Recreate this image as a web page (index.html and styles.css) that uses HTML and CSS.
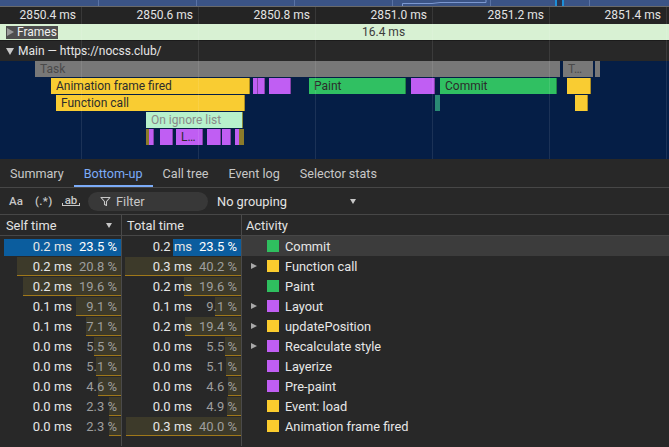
FILE: index.html
```html
<!DOCTYPE html>
<html>
<head>
<meta charset="utf-8">
<link rel="stylesheet" href="styles.css">
</head>
<body>
<div class="overview">
  <svg width="669" height="6" viewBox="0 0 669 6">
    <g stroke="#5a73a5" stroke-width="1">
      <line x1="98.5" y1="0" x2="98.5" y2="6"/>
      <line x1="196.5" y1="0" x2="196.5" y2="6"/>
      <line x1="294.5" y1="0" x2="294.5" y2="6"/>
      <line x1="392.5" y1="0" x2="392.5" y2="6"/>
      <line x1="490.5" y1="0" x2="490.5" y2="6"/>
      <line x1="589.5" y1="0" x2="589.5" y2="6"/>
    </g>
    <path d="M402.5 6 V3.5 H432 L440 2.5 H486 V0" fill="none" stroke="#7c98d0" stroke-width="1"/>
    <rect x="555" y="0" width="9" height="6" fill="#2a3550"/>
    <rect x="555" y="0" width="2" height="6" fill="#1d8fd8"/>
    <rect x="562" y="0" width="2" height="6" fill="#1d8fd8"/>
  </svg>
</div>
<div class="timeline">
  <div class="ruler">
    <span class="tick">2850.4 ms</span>
    <span class="tick">2850.6 ms</span>
    <span class="tick">2850.8 ms</span>
    <span class="tick">2851.0 ms</span>
    <span class="tick">2851.2 ms</span>
    <span class="tick">2851.4 ms</span>
  </div>
  <div class="frames">
    <span class="frames-label"><span class="tri-right"></span>Frames</span>
    <span class="frame-dur">16.4 ms</span>
  </div>
  <div class="track">
    <div class="main-head"><span class="tri-down"></span>Main — https://nocss.club/</div>
    <div class="flame">
      <div class="blk gray r0" style="left:35px;width:525px">Task</div>
      <div class="blk gray r0" style="left:563px;width:30px">T…</div>
      <div class="blk gray r0" style="left:595px;width:5px"></div>

      <div class="blk yellow r1" style="left:51px;width:199px">Animation frame fired</div>
      <div class="blk purple r1" style="left:253px;width:3px"></div>
      <div class="blk purple r1" style="left:258px;width:7px"></div>
      <div class="blk purple r1" style="left:269px;width:22px"></div>
      <div class="blk green r1" style="left:309px;width:97px">Paint</div>
      <div class="blk purple r1" style="left:411px;width:24px"></div>
      <div class="blk green r1" style="left:440px;width:117px">Commit</div>
      <div class="blk yellow r1" style="left:567px;width:24px"></div>

      <div class="blk yellow r2" style="left:56px;width:189px">Function call</div>
      <div class="blk teal r2" style="left:435px;width:1px"></div>
      <div class="blk yellow r2" style="left:575px;width:13px"></div>

      <div class="blk ignore r3" style="left:146px;width:97px">On ignore list</div>

      <div class="blk olive r4" style="left:146px;width:1px"></div>
      <div class="blk purple r4" style="left:149px;width:1px"></div>
      <div class="blk purple r4" style="left:160px;width:13px"></div>
      <div class="blk purple r4" style="left:176px;width:27px">L…</div>
      <div class="blk purple r4" style="left:207px;width:1px"></div>
      <div class="blk purple r4" style="left:211px;width:10px"></div>
      <div class="blk purple r4" style="left:222px;width:9px"></div>
      <div class="blk purple r4" style="left:235px;width:1px"></div>
      <div class="blk olive r4" style="left:239px;width:1px"></div>
    </div>
  </div>
</div>

<div class="tabs">
  <div class="tab">Summary</div>
  <div class="tab active">Bottom-up</div>
  <div class="tab">Call tree</div>
  <div class="tab">Event log</div>
  <div class="tab">Selector stats</div>
</div>

<div class="toolbar">
  <span class="tb-icon aa">Aa</span>
  <span class="tb-icon re">(.*)</span>
  <span class="tb-icon ab">ab</span>
  <div class="filter">
    <svg width="11" height="11" viewBox="0 0 11 11"><path d="M1 1.5 H10 L6.5 5.5 V9.5 L4.5 8.5 V5.5 Z" fill="none" stroke="#c7c7c7" stroke-width="1.1" stroke-linejoin="round"/></svg>
    <span>Filter</span>
  </div>
  <div class="grouping">No grouping</div>
  <span class="caret"></span>
</div>

<div class="table">
  <div class="hcell c1">Self time<span class="sort"></span></div>
  <div class="hcell c2">Total time</div>
  <div class="hcell c3">Activity</div>

  <div class="cell num c1"><span class="bar sel" style="width:117px"></span><span class="ms">0.2 ms</span><span class="pct hi">23.5 %</span></div>
  <div class="cell num c2"><span class="bar sel" style="width:68px"></span><span class="ms">0.2 ms</span><span class="pct hi">23.5 %</span></div>
  <div class="cell act selrow"><span class="exp none"></span><span class="sq green"></span>Commit</div>

  <div class="cell num c1"><span class="bar" style="width:104px"></span><span class="ms">0.2 ms</span><span class="pct">20.8 %</span></div>
  <div class="cell num c2"><span class="bar" style="width:116px"></span><span class="ms">0.3 ms</span><span class="pct">40.2 %</span></div>
  <div class="cell act"><span class="exp"></span><span class="sq yellow"></span>Function call</div>

  <div class="cell num c1"><span class="bar" style="width:98px"></span><span class="ms">0.2 ms</span><span class="pct">19.6 %</span></div>
  <div class="cell num c2"><span class="bar" style="width:57px"></span><span class="ms">0.2 ms</span><span class="pct">19.6 %</span></div>
  <div class="cell act"><span class="exp none"></span><span class="sq green"></span>Paint</div>

  <div class="cell num c1"><span class="bar" style="width:45px"></span><span class="ms">0.1 ms</span><span class="pct">9.1 %</span></div>
  <div class="cell num c2"><span class="bar" style="width:26px"></span><span class="ms">0.1 ms</span><span class="pct">9.1 %</span></div>
  <div class="cell act"><span class="exp"></span><span class="sq purple"></span>Layout</div>

  <div class="cell num c1"><span class="bar" style="width:35px"></span><span class="ms">0.1 ms</span><span class="pct">7.1 %</span></div>
  <div class="cell num c2"><span class="bar" style="width:56px"></span><span class="ms">0.2 ms</span><span class="pct">19.4 %</span></div>
  <div class="cell act"><span class="exp"></span><span class="sq yellow"></span>updatePosition</div>

  <div class="cell num c1"><span class="bar" style="width:27px"></span><span class="ms">0.0 ms</span><span class="pct">5.5 %</span></div>
  <div class="cell num c2"><span class="bar" style="width:16px"></span><span class="ms">0.0 ms</span><span class="pct">5.5 %</span></div>
  <div class="cell act"><span class="exp"></span><span class="sq purple"></span>Recalculate style</div>

  <div class="cell num c1"><span class="bar" style="width:25px"></span><span class="ms">0.0 ms</span><span class="pct">5.1 %</span></div>
  <div class="cell num c2"><span class="bar" style="width:15px"></span><span class="ms">0.0 ms</span><span class="pct">5.1 %</span></div>
  <div class="cell act"><span class="exp none"></span><span class="sq purple"></span>Layerize</div>

  <div class="cell num c1"><span class="bar" style="width:23px"></span><span class="ms">0.0 ms</span><span class="pct">4.6 %</span></div>
  <div class="cell num c2"><span class="bar" style="width:13px"></span><span class="ms">0.0 ms</span><span class="pct">4.6 %</span></div>
  <div class="cell act"><span class="exp none"></span><span class="sq purple"></span>Pre-paint</div>

  <div class="cell num c1"><span class="bar" style="width:12px"></span><span class="ms">0.0 ms</span><span class="pct">2.3 %</span></div>
  <div class="cell num c2"><span class="bar" style="width:14px"></span><span class="ms">0.0 ms</span><span class="pct">4.9 %</span></div>
  <div class="cell act"><span class="exp none"></span><span class="sq yellow"></span>Event: load</div>

  <div class="cell num c1"><span class="bar" style="width:12px"></span><span class="ms">0.0 ms</span><span class="pct">2.3 %</span></div>
  <div class="cell num c2"><span class="bar" style="width:115px"></span><span class="ms">0.3 ms</span><span class="pct">40.0 %</span></div>
  <div class="cell act"><span class="exp none"></span><span class="sq yellow"></span>Animation frame fired</div>

  <div class="cell fill c1"></div>
  <div class="cell fill c2"></div>
  <div class="cell fill"></div>
</div>
</body>
</html>
```
FILE: styles.css
```css
* { box-sizing: border-box; }
html, body { margin: 0; padding: 0; }
body {
  width: 669px;
  height: 447px;
  overflow: hidden;
  background: #282828;
  color: #e3e3e3;
  font-family: Roboto, "Liberation Sans", sans-serif;
}

.overview {
  height: 7px;
  background: #3b5486;
  border-bottom: 1px solid #6a6a6a;
}
.overview svg { display: block; }

.timeline { position: relative; overflow: hidden; }
.timeline::after {
  content: "";
  position: absolute;
  top: 0; bottom: 0;
  left: -35px; right: 0;
  background: repeating-linear-gradient(to right, transparent 0 116px, rgba(255,255,255,0.09) 116px 117px);
  pointer-events: none;
}

.ruler {
  display: flex;
  height: 17px;
  background: #242424;
  font-size: 12px;
  color: #e3e3e3;
}
.tick {
  flex: 0 0 117px;
  text-align: right;
  padding-right: 5px;
  line-height: 17px;
}
.tick:first-child { flex-basis: 81px; }

.frames {
  height: 17px;
  background: #d8f1d3;
  display: flex;
  align-items: center;
  font-size: 12px;
  border-bottom: 1px solid #1b1b1b;
}
.frames-label {
  margin-left: 6px;
  width: 52px;
  height: 13px;
  line-height: 13px;
  background: #4e4e4e;
  color: #f0f0f0;
  display: flex;
  align-items: center;
}
.tri-right {
  width: 0; height: 0;
  border-left: 7px solid #9a9a9a;
  border-top: 4.5px solid transparent;
  border-bottom: 4.5px solid transparent;
  margin: 0 3px 0 1px;
}
.frame-dur { margin-left: 304px; color: #3c3c3c; }

.track { box-shadow: inset 2px 0 #3a6ccb; }
.main-head {
  height: 20px;
  background: #282828;
  font-size: 12px;
  color: #e6e6e6;
  display: flex;
  align-items: center;
  padding-left: 6px;
}
.tri-down {
  width: 0; height: 0;
  border-top: 7px solid #c8c8c8;
  border-left: 4px solid transparent;
  border-right: 4px solid transparent;
  margin-right: 4px;
}
.flame {
  position: relative;
  height: 98px;
  background: #051e46;
}
.blk {
  position: absolute;
  height: 16px;
  line-height: 16px;
  font-size: 12px;
  padding-left: 5px;
  white-space: nowrap;
  overflow: hidden;
  color: #2c2c2c;
  box-shadow: inset -1px 0 rgba(0,0,0,0.3);
}
.r0 { top: 0; }
.r1 { top: 17px; }
.r2 { top: 34px; }
.r3 { top: 51px; }
.r4 { top: 68px; }
.gray { background: #787878; color: #4a4a4a; box-shadow: none; }
.yellow { background: #f9cc32; }
.green { background: #30c062; }
.purple { background: #c05ef3; }
.teal { background: #2a8a74; box-shadow: none; }
.olive { background: #8b7b2a; box-shadow: none; }
.ignore { background: #b7f1cc; color: #8a8a8a; box-shadow: inset -1px 0 #8b8b3a; }

.tabs {
  display: flex;
  height: 29px;
  border-bottom: 1px solid #474747;
  font-size: 12.6px;
}
.tab {
  padding: 1px 10px 0;
  display: flex;
  align-items: center;
  color: #c7c7c7;
}
.tab.active {
  color: #7cacf8;
  box-shadow: inset 0 -2px #7cacf8;
}

.toolbar {
  height: 27px;
  display: flex;
  align-items: center;
  border-bottom: 1px solid #474747;
  padding-left: 9px;
  color: #c7c7c7;
}
.tb-icon { font-size: 11.5px; font-weight: 500; }
.aa { width: 15px; margin-right: 11px; }
.re { width: 18px; margin-right: 9px; letter-spacing: 0.3px; }
.ab {
  width: 18px;
  text-align: center;
  line-height: 10px;
  position: relative;
  top: -1px;
  border-bottom: 1px solid #c7c7c7;
  margin-right: 8px;
}
.ab::before, .ab::after {
  content: "";
  position: absolute;
  bottom: -1px;
  width: 1px;
  height: 3px;
  background: #c7c7c7;
}
.ab::before { left: 0; }
.ab::after { right: 0; }
.filter {
  width: 120px;
  height: 19px;
  border-radius: 10px;
  background: #383838;
  display: flex;
  align-items: center;
  padding-left: 12px;
  font-size: 12.8px;
  color: #c7c7c7;
}
.filter svg { margin-right: 5px; }
.grouping { margin-left: 9px; font-size: 12.8px; color: #e3e3e3; }
.caret {
  margin-left: 63px;
  width: 0; height: 0;
  border-top: 5px solid #c7c7c7;
  border-left: 3.5px solid transparent;
  border-right: 3.5px solid transparent;
}

.table {
  display: grid;
  grid-template-columns: 122px 120px 1fr;
  grid-template-rows: 21px;
  grid-auto-rows: 20px;
  font-size: 13px;
}
.hcell {
  height: 21px;
  display: flex;
  align-items: center;
  border-bottom: 1px solid #474747;
  color: #e3e3e3;
  padding-left: 6px;
  font-size: 12.8px;
}
.c1, .c2 { border-right: 1px solid #4a4a4a; }
.hcell.c2 { padding-left: 5px; }
.hcell.c3 { padding-left: 4px; }
.sort {
  margin-left: auto;
  margin-right: 9px;
  width: 0; height: 0;
  border-top: 5px solid #c7c7c7;
  border-left: 3.5px solid transparent;
  border-right: 3.5px solid transparent;
}

.cell {
  position: relative;
  display: flex;
  align-items: center;
  height: 20px;
}
.num {
  justify-content: flex-end;
  padding-right: 4px;
}
.bar {
  position: absolute;
  right: 0;
  top: 1px;
  bottom: 0;
  background: #3d3a2a;
  border-bottom: 1px solid #a0781a;
}
.bar.sel { background: #0b5d9e; border-bottom: none; top: 3px; }
.ms { position: relative; color: #e6e6e6; margin-right: 3px; }
.pct { position: relative; width: 42px; text-align: right; color: #9e9e9e; }
.pct.hi { color: #ffffff; }

.act { padding-left: 9px; color: #e6e6e6; font-size: 12.8px; }
.selrow { background: #3c3c3c; }
.exp {
  width: 0; height: 0;
  border-left: 6px solid #a9a9a9;
  border-top: 3.5px solid transparent;
  border-bottom: 3.5px solid transparent;
  margin-right: 10px;
}
.exp.none { border-left-color: transparent; }
.sq { width: 12px; height: 12px; margin-right: 6px; }
.sq.green { background: #2fbf5f; }
.sq.yellow { background: #fbcc2e; }
.sq.purple { background: #c05ef3; }
.fill { height: 10px; }
```
